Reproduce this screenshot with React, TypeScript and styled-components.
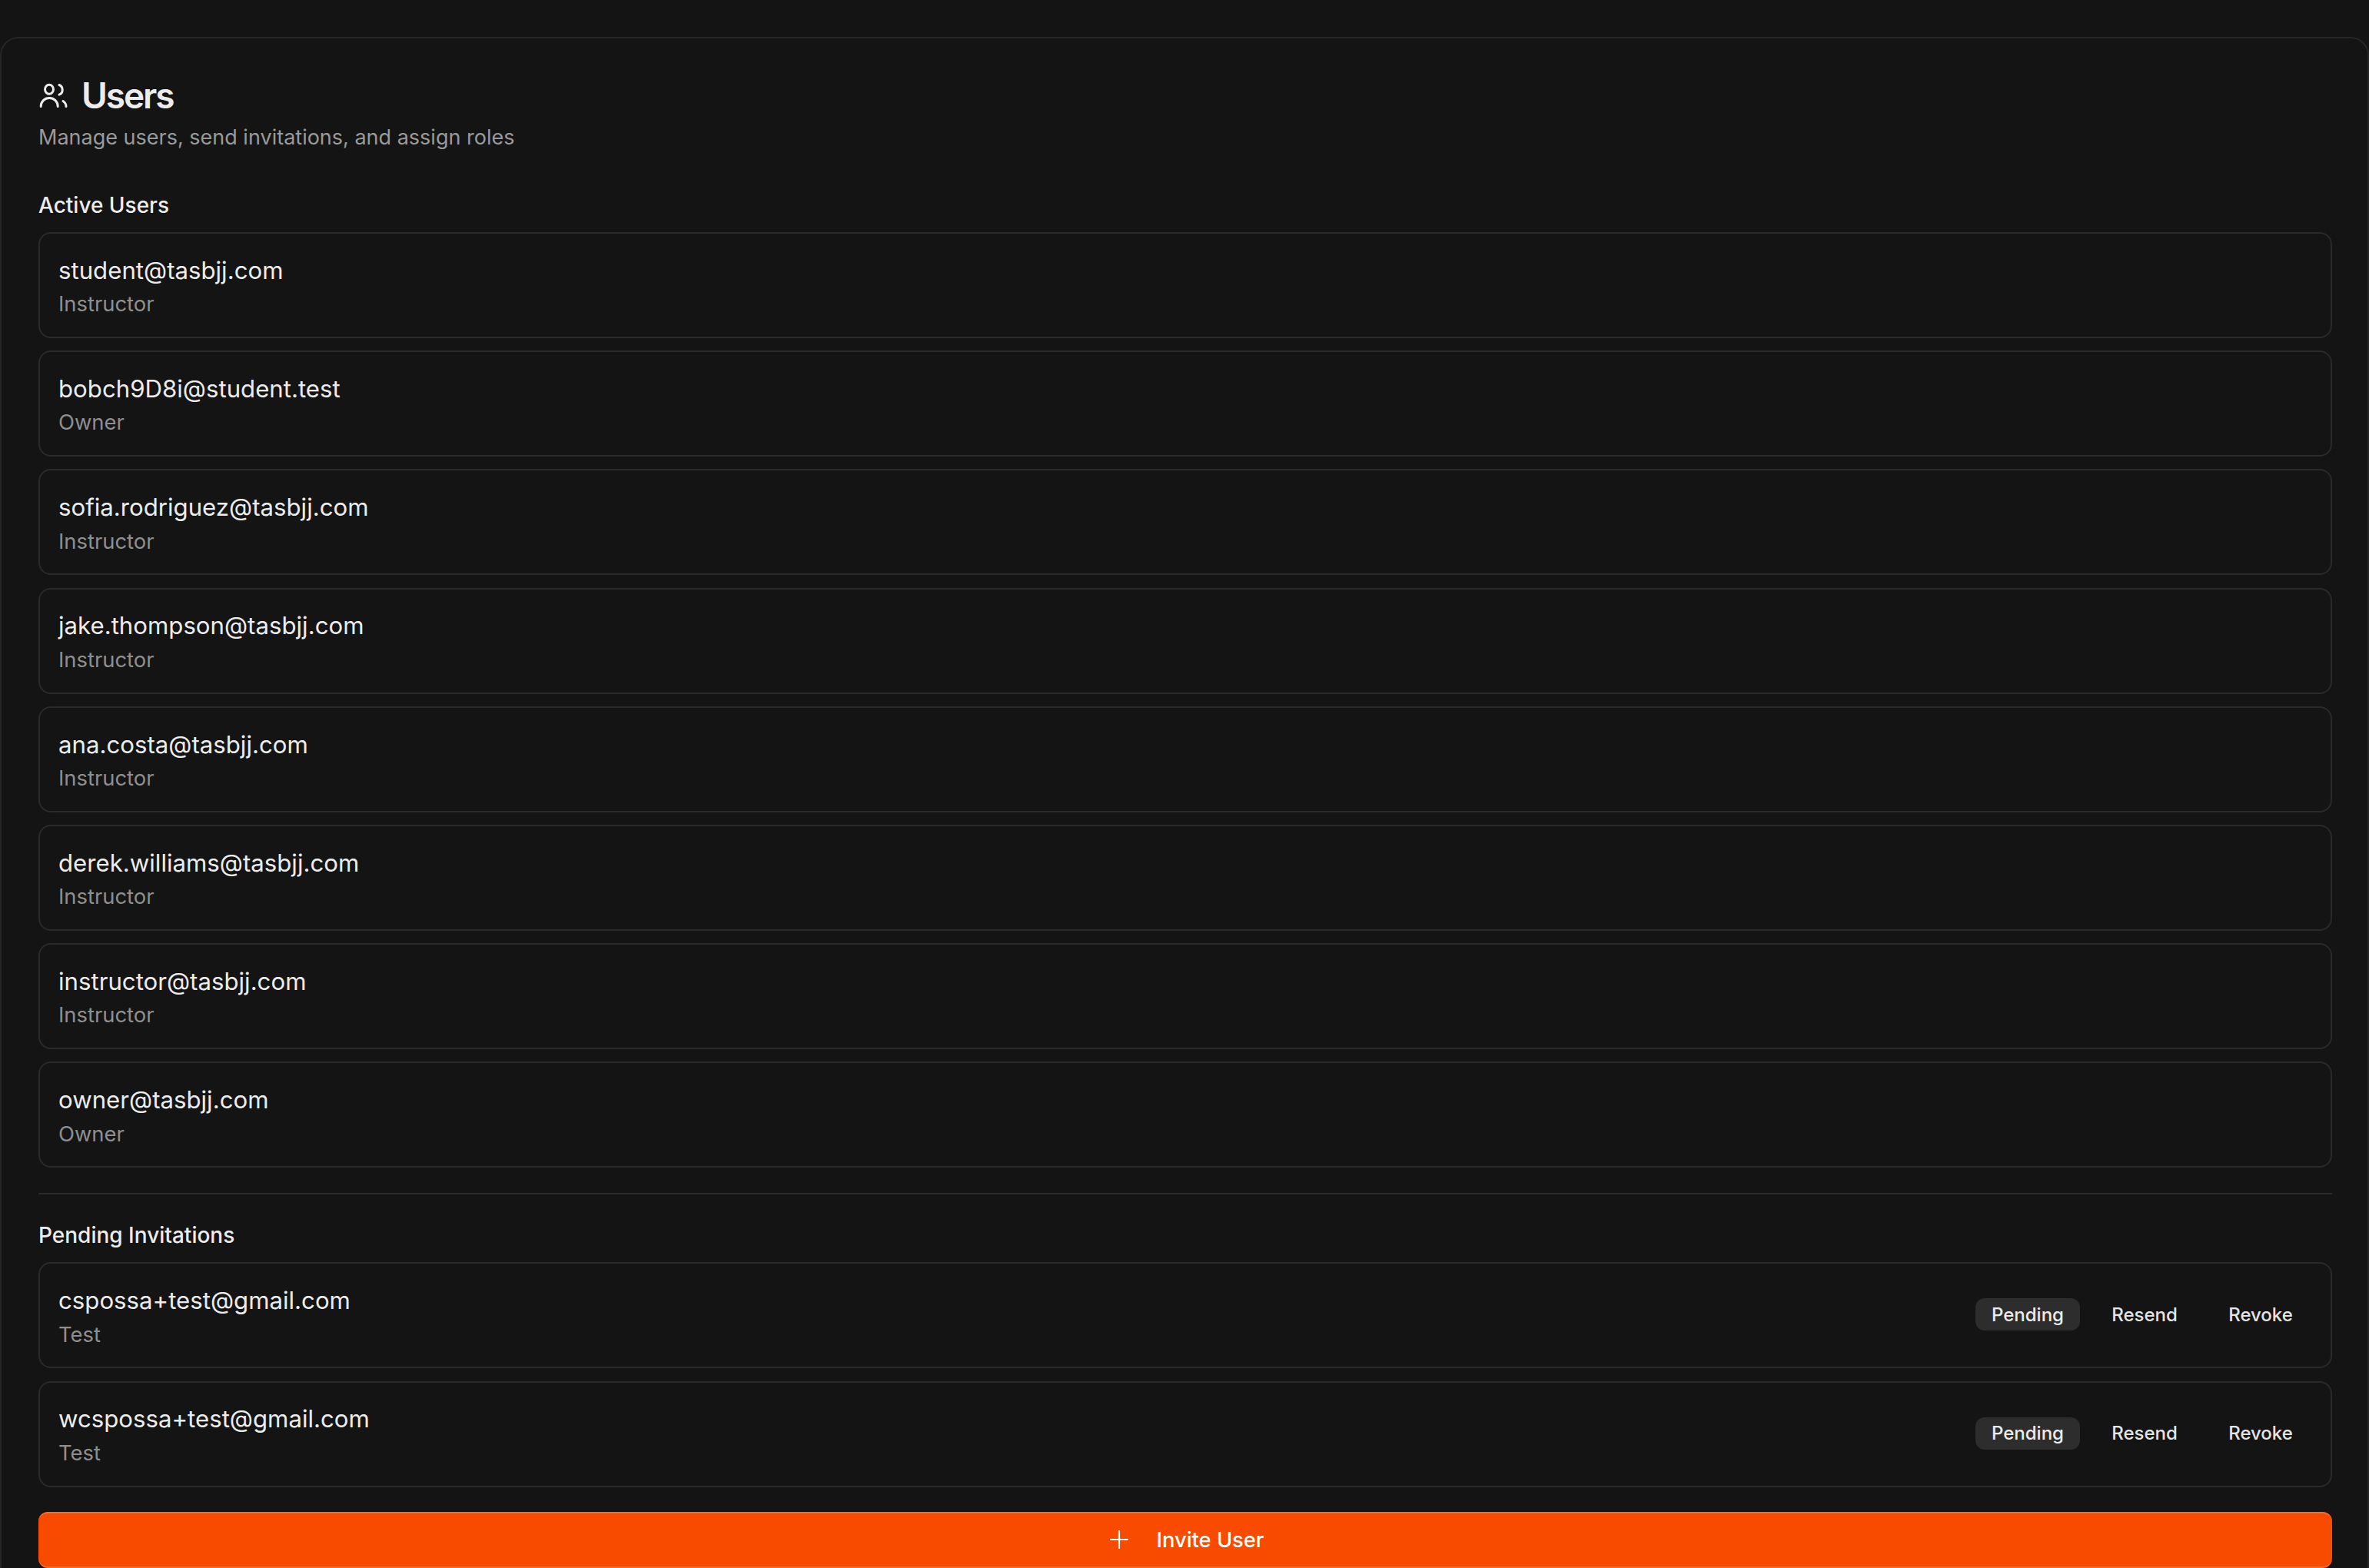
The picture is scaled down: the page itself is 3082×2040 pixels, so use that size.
import { FC } from 'react';
import styled, { createGlobalStyle } from 'styled-components';

interface Person {
  email: string;
  role: string;
}

const activeUsers: Person[] = [
  { email: 'student@tasbjj.com', role: 'Instructor' },
  { email: 'bobch9D8i@student.test', role: 'Owner' },
  { email: 'sofia.rodriguez@tasbjj.com', role: 'Instructor' },
  { email: 'jake.thompson@tasbjj.com', role: 'Instructor' },
  { email: 'ana.costa@tasbjj.com', role: 'Instructor' },
  { email: 'derek.williams@tasbjj.com', role: 'Instructor' },
  { email: 'instructor@tasbjj.com', role: 'Instructor' },
  { email: 'owner@tasbjj.com', role: 'Owner' },
];

const invitations: Person[] = [
  { email: 'cspossa+test@gmail.com', role: 'Test' },
  { email: 'wcspossa+test@gmail.com', role: 'Test' },
];

const UsersIcon: FC = () => (
  <svg width="40" height="40" viewBox="0 0 40 40" fill="none" stroke="#ececec" strokeWidth="3" strokeLinecap="round">
    <ellipse cx="14" cy="12.2" rx="5.5" ry="6" />
    <path d="M3.2 34.5C3.2 28 8 23.5 14.2 23.5S25.2 28 25.2 34.5" />
    <path d="M27 6.5C29.8 7.6 31.2 10 31.2 13S29.8 18.2 27 19.2" />
    <path d="M32 27.5C34.5 29.2 36 31.6 36 34.5" />
  </svg>
);

const PlusIcon: FC = () => (
  <svg width="24" height="24" viewBox="0 0 24 24" fill="none" stroke="#ffffff" strokeWidth="2.2" strokeLinecap="round">
    <path d="M1 12h22M12 1v22" />
  </svg>
);

const UserRow: FC<Person & { pending?: boolean }> = ({ email, role, pending }) => (
  <Row>
    <Info>
      <Email>{email}</Email>
      <Role>{role}</Role>
    </Info>
    {pending && (
      <Actions>
        <Badge>Pending</Badge>
        <ActionButton>Resend</ActionButton>
        <ActionButton>Revoke</ActionButton>
      </Actions>
    )}
  </Row>
);

const App: FC = () => (
  <>
    <GlobalStyle />
    <Page>
      <Card>
        <Title>
          <UsersIcon />
          <TitleText>Users</TitleText>
        </Title>
        <Subtitle>Manage users, send invitations, and assign roles</Subtitle>
        <SectionTitle $top={48}>Active Users</SectionTitle>
        <List>
          {activeUsers.map((u) => (
            <UserRow key={u.email} {...u} />
          ))}
        </List>
        <Divider />
        <SectionTitle $top={33}>Pending Invitations</SectionTitle>
        <List>
          {invitations.map((u) => (
            <UserRow key={u.email} {...u} pending />
          ))}
        </List>
        <InviteButton>
          <PlusIcon />
          Invite User
        </InviteButton>
      </Card>
    </Page>
  </>
);

const GlobalStyle = createGlobalStyle`
  html, body {
    margin: 0;
    padding: 0;
    background: #141414;
  }
  * {
    box-sizing: border-box;
  }
`;

const Page = styled.div`
  height: 2040px;
  padding-top: 48px;
  overflow: hidden;
  background: #141414;
  font-family: Inter, 'Liberation Sans', sans-serif;
  color: #ececec;
`;

const Card = styled.div`
  height: 2100px;
  padding: 0 46px 0 48px;
  border: 2px solid #262626;
  border-radius: 24px;
`;

const Title = styled.div`
  display: flex;
  align-items: center;
  gap: 16px;
  height: 48px;
  margin-top: 50px;
`;

const TitleText = styled.h1`
  margin: 0;
  font-size: 46px;
  line-height: 48px;
  font-weight: 600;
  letter-spacing: -0.045em;
  color: #ececec;
`;

const Subtitle = styled.p`
  margin: 11px 0 0;
  font-size: 27px;
  line-height: 40px;
  color: #9a9a9a;
`;

const SectionTitle = styled.h2<{ $top: number }>`
  margin: ${(p) => p.$top}px 0 0;
  font-size: 28px;
  line-height: 40px;
  font-weight: 500;
  color: #ececec;
`;

const List = styled.div`
  display: flex;
  flex-direction: column;
  gap: 16.2px;
  margin-top: 15px;
`;

const Row = styled.div`
  display: flex;
  align-items: center;
  justify-content: space-between;
  height: 138px;
  padding: 0 32px 0 24px;
  border: 2px solid #2a2a2a;
  border-radius: 16px;
`;

const Info = styled.div`
  display: flex;
  flex-direction: column;
  gap: 3.5px;
  padding-top: 5px;
`;

const Email = styled.div`
  font-size: 31.2px;
  line-height: 40px;
  font-weight: 400;
  color: #ececec;
`;

const Role = styled.div`
  font-size: 27.4px;
  line-height: 40px;
  color: #8f8f8f;
`;

const Actions = styled.div`
  display: flex;
  align-items: center;
  gap: 0;
  margin-top: -2px;
`;

const Badge = styled.span`
  display: flex;
  align-items: center;
  justify-content: center;
  width: 136px;
  height: 42px;
  margin-right: 25px;
  border-radius: 12px;
  background: #2e2d2d;
  font-size: 24px;
  font-weight: 500;
  color: #ececec;
`;

const ActionButton = styled.button`
  width: 118px;
  height: 42px;
  margin-right: 33px;
  padding: 0;
  border: 0;
  background: transparent;
  font-family: inherit;
  font-size: 24px;
  font-weight: 500;
  color: #e4e4e4;

  &:last-child {
    margin-right: 0;
  }
`;

const Divider = styled.div`
  height: 2px;
  margin-top: 33px;
  background: #2a2a2a;
`;

const InviteButton = styled.button`
  display: flex;
  align-items: center;
  justify-content: center;
  gap: 37px;
  width: 100%;
  height: 73px;
  margin-top: 32px;
  padding: 0 0 0 4px;
  border: 0;
  border-top: 2px solid #ff6a2b;
  border-bottom: 2px solid #ff6a2b;
  border-radius: 12px;
  background: #f94b00;
  font-family: inherit;
  font-size: 27.3px;
  font-weight: 500;
  color: #ffffff;
`;

export default App;
